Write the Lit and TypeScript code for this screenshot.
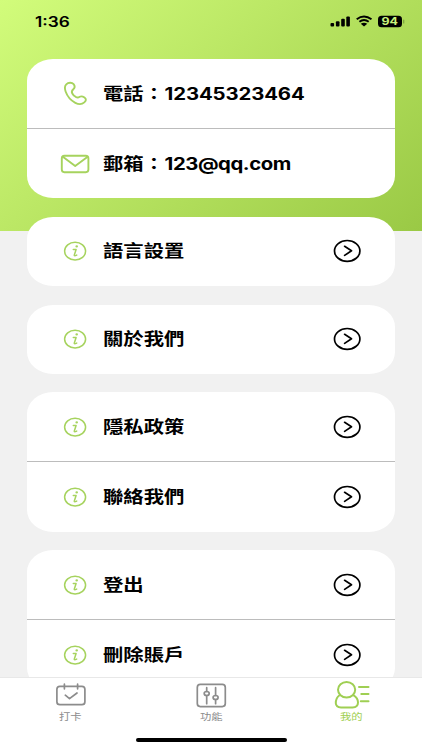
import { LitElement, html, svg, css } from "lit";
import { customElement } from "lit/decorators.js";

const phone = svg`<svg class="icon" width="32" height="28" viewBox="59 79.500 32 28"><path d="M66.300 83.800C68.200 81.900 72 81.800 73.600 83.600C75.100 85.500 75 87.200 73.300 88.700C71.600 90.200 71.500 91.600 72.300 93C73.200 94.700 74.500 95.900 76.200 96.700C77.600 97.300 78.600 97 79.700 96.300C81.200 95.400 82.700 95.800 84.500 97C86.500 98.400 86.200 100.200 84.300 101.900C82.100 103.900 78.700 104.100 75.300 102.300C70.800 99.900 67.300 95.800 65.600 91C64.600 88.100 64.700 85.400 66.300 83.800Z"/></svg>`;
const mail = svg`<svg class="icon" width="32" height="28" viewBox="59 150 32 28"><rect x="61.800" y="155.800" width="26.600" height="16.400" rx="2.600"/><path d="M63.500 157.200L75.200 166.100L87 157.200"/></svg>`;
const info = svg`<svg class="icon" width="32" height="28" viewBox="59 237.300 32 28"><ellipse class="thin" cx="75.100" cy="251.400" rx="10.500" ry="8.900"/><path class="thin" d="M73.300 249.800h2.800l-1.800 5.600q-.3 1.300 2.400 0"/><ellipse class="dot" cx="76.700" cy="246.700" rx="1.300" ry="1.100"/></svg>`;
const arrow = svg`<svg class="arrow" width="30" height="26" viewBox="332 238.200 30 26"><ellipse cx="346.200" cy="251.100" rx="12.700" ry="10.400"/><path d="M343.600 246.500L350.500 251L343.600 255.600"/></svg>`;
const calendar = svg`<svg width="40" height="30" viewBox="50.200 680 40 30"><rect x="57.100" y="686.300" width="28" height="18.400" rx="3"/><path d="M64.600 684.200v4.600M77.800 684.200v4.600M65.500 695.200L69.700 698.600L77.200 693"/></svg>`;
const sliders = svg`<svg width="40" height="30" viewBox="191 680 40 30"><rect x="197.300" y="684.400" width="28" height="22.200" rx="3"/><path d="M206.700 687.700v3.700M206.700 695.700v8M215.600 687.700v7.700M215.600 699.700v4"/><ellipse cx="206.700" cy="693.500" rx="2.500" ry="2"/><ellipse cx="215.600" cy="697.500" rx="2.500" ry="2"/></svg>`;
const person = svg`<svg class="mine" width="40" height="30" viewBox="332 680 40 30"><ellipse cx="346.600" cy="689.800" rx="8.600" ry="7.700"/><path d="M339.500 695.300Q335.700 698 335.800 703.300Q336 707.300 341 707.500H352.500Q358 707.200 358 702.500Q358 698 353.700 695.300M359 687H368.500M361.300 694H368.500M360.800 701.300H368.500"/></svg>`;

@customElement("app-root")
export class AppRoot extends LitElement {
  static styles = css`
    :host { display: block; width: 422px; height: 750px; overflow: hidden; background: #f1f1f1; color: #000; font-family: Inter, "Noto Sans CJK TC", sans-serif; }
    * { box-sizing: border-box; }
    .screen { position: relative; height: 750px; display: flex; flex-direction: column; background: linear-gradient(140deg, #d2fc7b 0%, #9ac945 100%) 0 0 / 100% 231px no-repeat; }
    .status { flex: none; height: 59px; padding: 12px 17px 0 35px; display: flex; justify-content: space-between; align-items: flex-start; }
    .time { font-size: 14px; font-weight: 600; line-height: 19px; transform: scaleX(1.23); transform-origin: left; }
    .signals { display: block; }
    .level { font: 700 10.5px Inter, sans-serif; fill: #c9f37b; }
    .content { flex: 1; min-height: 0; overflow: hidden; padding: 0 27px; display: flex; flex-direction: column; gap: 18.500px; }
    .card { flex: none; background: #fff; border-radius: 26px / 22px; }
    .row { height: 69.200px; padding: 0 32px 0 32px; display: flex; align-items: center; }
    .row + .row { border-top: 1px solid #bcbcbc; height: 70.200px; }
    svg { flex: none; fill: none; stroke-linecap: round; stroke-linejoin: round; }
    .icon { stroke: #a6d35e; stroke-width: 1.900; }
    .thin { stroke-width: 1.500; }
    .dot { fill: #a6d35e; stroke: none; }
    .arrow { stroke: #000; stroke-width: 1.700; }
    .label { flex: 1; margin-left: 12px; font-size: 16.700px; font-weight: 700; line-height: 24px; white-space: nowrap; transform: scaleX(1.218); transform-origin: left; }
    .latin { font-weight: 650; margin-left: 0.500px; letter-spacing: -0.370px; }
    .digits { letter-spacing: -0.090px; }
    .tabs { flex: none; height: 73px; border-top: 1px solid #e8e8e8; background: #fff; display: flex; }
    .tab { flex: 1; display: flex; flex-direction: column; align-items: center; padding-top: 2px; color: #8c8c8c; }
    .tab svg { stroke: currentColor; stroke-width: 1.700; }
    .tab .mine { stroke-width: 2; }
    .tab.active { color: #9fcf53; }
    .caption { font-size: 9.300px; line-height: 14px; transform: scaleX(1.218); }
    .home { position: absolute; left: 136px; top: 737.500px; width: 150.500px; height: 4.800px; border-radius: 3px; background: #000; }
  `;

  private item(name: string) {
    return html`<div class="row">${info}<span class="label">${name}</span>${arrow}</div>`;
  }

  render() {
    return html`<div class="screen">
      <div class="status">
        <span class="time">1:36</span>
        <svg class="signals" width="76" height="18" viewBox="329 12 76 18">
          <g fill="#000"><rect x="330.500" y="23" width="3.600" height="3.400" rx="1"/><rect x="335.900" y="21.200" width="3.600" height="5.200" rx="1"/><rect x="341.200" y="18.800" width="3.600" height="7.600" rx="1"/><rect x="346.300" y="16.600" width="3.600" height="9.800" rx="1"/><path d="M360.800 23.700Q364 21.700 367.300 23.700L364 26.400Z"/><rect x="378" y="15.700" width="24" height="11.500" rx="3.500"/></g>
          <path d="M356.700 19.200Q364 13.800 371.500 19.200M359.400 21.800Q364 18.300 368.700 21.800" stroke="#000" stroke-width="1.900" stroke-linecap="butt"/>
          <path d="M403.700 20v3" stroke="#7ba43d" stroke-width="1.200"/>
          <text class="level" x="381.500" y="25.300" textLength="16.500" lengthAdjust="spacingAndGlyphs">94</text>
        </svg>
      </div>
      <div class="content">
        <div class="card">
          <div class="row">${phone}<span class="label">電話：<span class="latin digits">12345323464</span></span></div>
          <div class="row">${mail}<span class="label">郵箱：<span class="latin">123@qq.com</span></span></div>
        </div>
        <div class="card">${this.item("語言設置")}</div>
        <div class="card">${this.item("關於我們")}</div>
        <div class="card">${this.item("隱私政策")}${this.item("聯絡我們")}</div>
        <div class="card">${this.item("登出")}${this.item("刪除賬戶")}</div>
      </div>
      <div class="tabs">
        <div class="tab">${calendar}<span class="caption">打卡</span></div>
        <div class="tab">${sliders}<span class="caption">功能</span></div>
        <div class="tab active">${person}<span class="caption">我的</span></div>
      </div>
      <div class="home"></div>
    </div>`;
  }
}
